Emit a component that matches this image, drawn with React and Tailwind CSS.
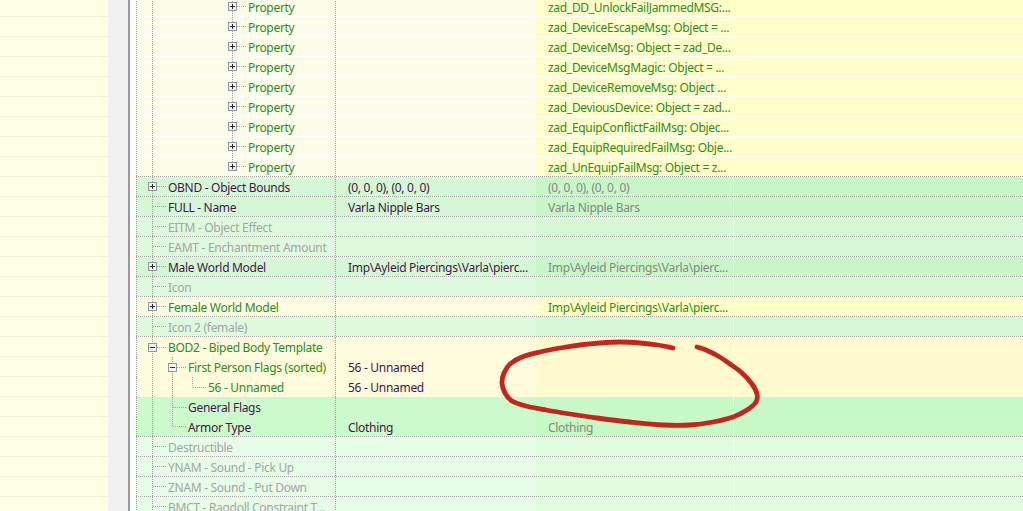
import React from "react";

// colour sets per row: [name + value column, override columns]
const TONES = {
  prop: ["bg-[#fdfee9]", "bg-[#ffffc9]"],
  green: ["bg-[#d5f7d5]", "bg-[#c9f6c9]"],
  pale: ["bg-[#dff9df]", "bg-[#d6f8d6]"],
  yellow: ["bg-[#fdfde3]", "bg-[#ffffc8]"],
  bod: ["bg-[#fefcdc]", "bg-[#fffbce]"],
  flag: ["bg-[#cdfacd]", "bg-[#c6f9c6]"],
  mint: ["bg-[#e7fde7]", "bg-[#e1fbe1]"],
};

const INK = {
  green: "text-[#2e8a22]",
  purple: "text-[#44154a]",
  gray: "text-[#a2a6a2]",
  dim: "text-[#878787]",
};

const SEPARATORS = {
  dot: "border-b border-dotted border-[#a3a3a3]",
  faint: "border-b border-white/70",
  none: "",
};

const propertyValues = [
  "zad_DD_UnlockFailJammedMSG:...",
  "zad_DeviceEscapeMsg: Object = ...",
  "zad_DeviceMsg: Object = zad_De...",
  "zad_DeviceMsgMagic: Object = ...",
  "zad_DeviceRemoveMsg: Object ...",
  "zad_DeviousDevice: Object = zad...",
  "zad_EquipConflictFailMsg: Objec...",
  "zad_EquipRequiredFailMsg: Obje...",
  "zad_UnEquipFailMsg: Object = z...",
];

const rows = [
  ...propertyValues.map((v, i) => ({
    label: "Property",
    level: 5,
    up: [1],
    last: i === propertyValues.length - 1,
    box: "plus",
    tone: "prop",
    ink: "green",
    over: v,
    overInk: "green",
    sep: i === propertyValues.length - 1 ? "dot" : "faint",
  })),
  { label: "OBND - Object Bounds", level: 1, box: "plus", tone: "green", ink: "purple", value: "(0, 0, 0), (0, 0, 0)", over: "(0, 0, 0), (0, 0, 0)", overInk: "dim", sep: "dot" },
  { label: "FULL - Name", level: 1, tone: "green", ink: "purple", value: "Varla Nipple Bars", over: "Varla Nipple Bars", overInk: "dim", sep: "dot" },
  { label: "EITM - Object Effect", level: 1, tone: "pale", ink: "gray", sep: "dot" },
  { label: "EAMT - Enchantment Amount", level: 1, tone: "pale", ink: "gray", sep: "dot" },
  { label: "Male World Model", level: 1, box: "plus", tone: "green", ink: "purple", value: "Imp\\Ayleid Piercings\\Varla\\pierc...", over: "Imp\\Ayleid Piercings\\Varla\\pierc...", overInk: "dim", sep: "dot" },
  { label: "Icon", level: 1, tone: "pale", ink: "gray", sep: "dot" },
  { label: "Female World Model", level: 1, box: "plus", tone: "yellow", ink: "green", over: "Imp\\Ayleid Piercings\\Varla\\pierc...", overInk: "green", sep: "dot" },
  { label: "Icon 2 (female)", level: 1, tone: "pale", ink: "gray", sep: "dot" },
  { label: "BOD2 - Biped Body Template", level: 1, box: "minus", tone: "bod", ink: "green", sep: "none" },
  { label: "First Person Flags (sorted)", level: 2, up: [1], box: "minus", tone: "bod", ink: "green", value: "56 - Unnamed", sep: "none" },
  { label: "56 - Unnamed", level: 3, up: [1, 2], last: true, tone: "bod", ink: "green", value: "56 - Unnamed", sep: "none" },
  { label: "General Flags", level: 2, up: [1], tone: "flag", ink: "purple", sep: "none" },
  { label: "Armor Type", level: 2, up: [1], last: true, tone: "flag", ink: "purple", value: "Clothing", over: "Clothing", overInk: "dim", sep: "dot" },
  { label: "Destructible", level: 1, tone: "mint", ink: "gray", sep: "dot" },
  { label: "YNAM - Sound - Pick Up", level: 1, tone: "mint", ink: "gray", sep: "dot" },
  { label: "ZNAM - Sound - Put Down", level: 1, tone: "mint", ink: "gray", sep: "dot" },
  { label: "BMCT - Ragdoll Constraint T...", level: 1, tone: "mint", ink: "gray", sep: "dot" },
];

const lineX = (level) => 15 + 20 * (level - 1);

function TreeLines({ level, up = [], last, box, height }) {
  const w = 31 + 20 * (level - 1);
  const cx = lineX(level);
  const mid = Math.floor(height / 2) + 0.5;
  const dots = { stroke: "#a0a0a0", strokeWidth: 1, strokeDasharray: "1 1" };
  return (
    <svg width={w} height={height} className="shrink-0">
      {up.map((l) => (
        <line key={l} x1={lineX(l) + 0.5} x2={lineX(l) + 0.5} y1={0} y2={height} {...dots} />
      ))}
      <line x1={cx + 0.5} x2={cx + 0.5} y1={0} y2={last ? mid : height} {...dots} />
      <line x1={box ? cx + 5 : cx + 1} x2={w - 2} y1={mid} y2={mid} {...dots} />
      {box && (
        <g>
          <rect x={cx - 3.5} y={mid - 4} width={8} height={8} fill="#f4f4f4" stroke="#8e96a0" />
          <line x1={cx - 2} x2={cx + 3} y1={mid} y2={mid} stroke="#2b2b2b" />
          {box === "plus" && <line x1={cx + 0.5} x2={cx + 0.5} y1={mid - 2.5} y2={mid + 2.5} stroke="#2b2b2b" />}
        </g>
      )}
    </svg>
  );
}

function RecordRow({ row }) {
  const [main, over] = TONES[row.tone];
  const height = row.sep === "none" ? 20 : 19;
  return (
    <div className={`flex h-5 shrink-0 ${SEPARATORS[row.sep]}`}>
      <div className={`flex w-[199px] shrink-0 items-center overflow-hidden whitespace-nowrap border-l border-dotted border-[#a3a3a3] ${main}`}>
        <TreeLines level={row.level} up={row.up} last={row.last} box={row.box} height={height} />
        <span className={`pt-[2px] ${INK[row.ink]}`}>{row.label}</span>
      </div>
      <div className={`flex w-[201px] shrink-0 items-center overflow-hidden whitespace-nowrap border-l border-dotted border-[#a3a3a3] pl-3 ${main}`}>
        <span className={`pt-[2px] ${INK.purple}`}>{row.value}</span>
      </div>
      <div className={`flex w-[197px] shrink-0 items-center overflow-hidden whitespace-nowrap pl-3 ${over}`}>
        <span className={`pt-[2px] ${INK[row.overInk || "dim"]}`}>{row.over}</span>
      </div>
      <div className={`flex-1 border-l border-white/60 ${over}`} />
    </div>
  );
}

// hand-drawn loop around the empty override cells
const loop = [
  [673, 348], [658, 345], [640, 343], [620, 342], [600, 343], [580, 345], [560, 348],
  [540, 352], [522, 357], [510, 364], [504, 373], [502, 383], [505, 393], [512, 401],
  [526, 406], [546, 410], [570, 414], [597, 418], [630, 422], [663, 425], [690, 425],
  [713, 422], [733, 417], [747, 410], [756, 402], [757, 394], [752, 384], [742, 373],
  [730, 364], [718, 356], [706, 350], [697, 347],
];

function smoothPath(pts) {
  let d = `M${pts[0][0]},${pts[0][1]}`;
  for (let i = 0; i < pts.length - 1; i++) {
    const p0 = pts[i - 1] || pts[i];
    const p1 = pts[i];
    const p2 = pts[i + 1];
    const p3 = pts[i + 2] || p2;
    const c1 = [p1[0] + (p2[0] - p0[0]) / 6, p1[1] + (p2[1] - p0[1]) / 6];
    const c2 = [p2[0] - (p3[0] - p1[0]) / 6, p2[1] - (p3[1] - p1[1]) / 6];
    d += ` C${c1[0]},${c1[1]} ${c2[0]},${c2[1]} ${p2[0]},${p2[1]}`;
  }
  return d;
}

export default function App() {
  return (
    <div className="relative flex h-[511px] w-[1023px] overflow-hidden bg-white font-['Noto_Sans',sans-serif] text-[12px] tracking-[-0.3px]">
      {/* record list pane */}
      <div className="w-[108px] shrink-0 overflow-hidden bg-[#fffee6]">
        <div className="-mt-[3px] flex flex-col">
          {Array.from({ length: 27 }).map((_, i) => (
            <div key={i} className="h-5 shrink-0 border-b border-[#f1f0d6]" />
          ))}
        </div>
      </div>
      <div className="w-5 shrink-0 bg-[#f0f0f0]" />
      <div className="w-[2px] shrink-0 bg-[#9a9a9a]" />
      <div className="w-[6px] shrink-0 bg-[#fbfbfb]" />

      {/* record view tree */}
      <div className="flex-1 overflow-hidden">
        <div className="-mt-[3px] flex flex-col">
          {rows.map((row, i) => (
            <RecordRow key={i} row={row} />
          ))}
        </div>
      </div>

      <svg className="pointer-events-none absolute left-0 top-0" width="1023" height="511" viewBox="0 0 1023 511">
        <path d={smoothPath(loop)} fill="none" stroke="#c4251c" strokeWidth="4.8" strokeLinecap="round" strokeLinejoin="round" />
      </svg>
    </div>
  );
}
